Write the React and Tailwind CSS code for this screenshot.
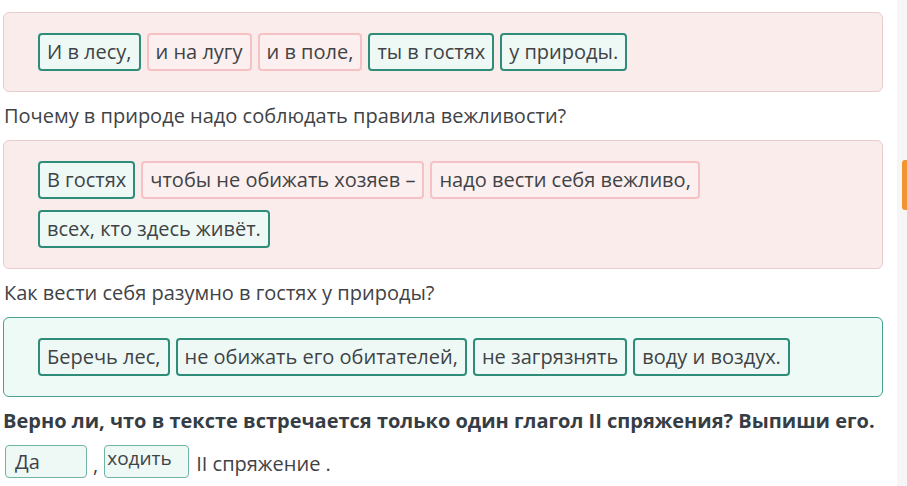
import React from "react";

const font = { fontFamily: '"Open Sans", "Noto Sans", sans-serif' };

function Tile({ children, ok }) {
  return (
    <div
      className={
        "rounded-[4px] border-2 px-[7px] py-[4px] text-[20px] leading-[26px] text-[#3f4346] whitespace-nowrap " +
        (ok ? "border-[#2f8c79] bg-[#eef9f6]" : "border-[#f6c1c5] bg-[#fcefef]")
      }
    >
      {children}
    </div>
  );
}

function Box({ ok, children }) {
  return (
    <div
      className={
        "rounded-[6px] border pl-[34px] pr-[20px] py-[20px] flex flex-wrap gap-x-[6px] gap-y-[11px] " +
        (ok ? "border-[#48a08e] bg-[#eefaf6]" : "border-[#e6cccc] bg-[#fbecec]")
      }
    >
      {children}
    </div>
  );
}

function Question({ children }) {
  return (
    <div className="h-[48px] flex items-center text-[20px] text-[#3f4346] pl-[1px]">
      {children}
    </div>
  );
}

export default function App() {
  return (
    <div className="w-[907px] h-[486px] bg-white flex overflow-hidden" style={font}>
      <div className="flex-1 pl-[3px] pr-[14px] pt-[12px] flex flex-col">
        <Box>
          <Tile ok>И в лесу,</Tile>
          <Tile>и на лугу</Tile>
          <Tile>и в поле,</Tile>
          <Tile ok>ты в гостях</Tile>
          <Tile ok>у природы.</Tile>
        </Box>
        <Question>Почему в природе надо соблюдать правила вежливости?</Question>
        <Box>
          <Tile ok>В гостях</Tile>
          <Tile>чтобы не обижать хозяев –</Tile>
          <Tile>надо вести себя вежливо,</Tile>
          <Tile ok>всех, кто здесь живёт.</Tile>
        </Box>
        <Question>Как вести себя разумно в гостях у природы?</Question>
        <Box ok>
          <Tile ok>Беречь лес,</Tile>
          <Tile ok>не обижать его обитателей,</Tile>
          <Tile ok>не загрязнять</Tile>
          <Tile ok>воду и воздух.</Tile>
        </Box>
        <div className="h-[48px] flex items-center text-[20px] font-bold text-[#363d44] whitespace-nowrap">
          Верно ли, что в тексте встречается только один глагол II спряжения? Выпиши его.
        </div>
        <div className="flex items-end text-[20px] text-[#3f4346] pl-[2px]">
          <div className="w-[82px] h-[33px] rounded-[4px] border border-[#6fb5a6] bg-[#eef9f6] pl-[9px] leading-[30px] pt-[1px]">
            Да
          </div>
          <span className="ml-[6px] mr-[6px] leading-[26px]">,</span>
          <div className="w-[85px] h-[33px] rounded-[4px] border border-[#6fb5a6] bg-[#eef9f6] pl-[2px] leading-[24px] text-[19px]">
            ходить
          </div>
          <span className="ml-[7px] leading-[28px]">II спряжение .</span>
        </div>
      </div>
      <div className="w-[10px] bg-[#f6f6f6] flex flex-col items-end">
        <div className="mt-[160px] w-[5px] h-[50px] rounded-l-[3px] bg-[#f29430]" />
      </div>
    </div>
  );
}
